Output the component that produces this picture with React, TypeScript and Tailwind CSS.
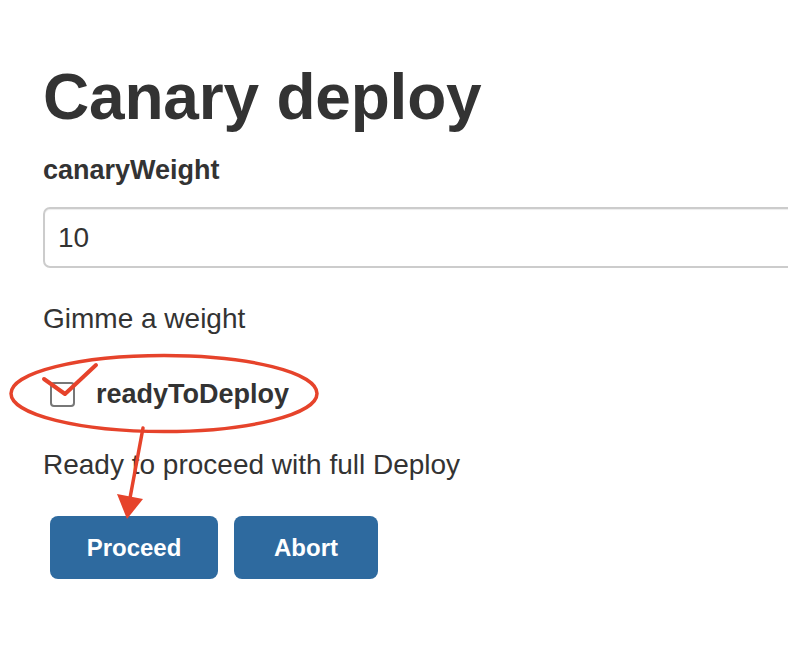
export default function App() {
  return (
    <div className="relative w-[788px] h-[662px] overflow-hidden bg-white text-[#333] font-['Liberation_Sans',Arial,sans-serif]">
      <div className="pl-[43px] pt-[62px]">
        <h1 className="text-[64px] leading-[70px] font-bold tracking-[-0.2px]">Canary deploy</h1>

        <label className="block mt-[20px] text-[27px] leading-[36px] font-bold">canaryWeight</label>
        <input
          readOnly
          value="10"
          className="block mt-[19px] w-[800px] h-[61px] px-[13px] border-2 border-[#ccc] rounded-[7px] text-[28px] text-[#333] outline-none shadow-[inset_0_1px_1px_rgba(0,0,0,0.075)]"
        />
        <p className="mt-[31px] text-[28px] leading-[40px]">Gimme a weight</p>

        <div className="mt-[37px] ml-[7px] flex items-center gap-[21px]">
          <span className="w-[25px] h-[25px] rounded-[4px] border-2 border-[#777] bg-white" />
          <span className="text-[27px] leading-[36px] font-bold">readyToDeploy</span>
        </div>

        <p className="mt-[33px] text-[28px] leading-[40px]">Ready to proceed with full Deploy</p>

        <div className="mt-[31px] ml-[7px] flex gap-[16px]">
          <button className="w-[168px] h-[63px] rounded-[8px] bg-[#2e6a9f] text-white text-[24px] font-bold">
            Proceed
          </button>
          <button className="w-[144px] h-[63px] rounded-[8px] bg-[#2e6a9f] text-white text-[24px] font-bold">
            Abort
          </button>
        </div>
      </div>

      {/* red annotations drawn on top */}
      <svg className="absolute inset-0 pointer-events-none" width="788" height="662" viewBox="0 0 788 662">
        <ellipse cx="164" cy="393.5" rx="153" ry="38" fill="none" stroke="#e6432b" strokeWidth="3.5" />
        <polyline points="44,379 65,394 96,365" fill="none" stroke="#e6432b" strokeWidth="4" strokeLinecap="round" strokeLinejoin="round" />
        <line x1="143" y1="428" x2="130" y2="498" stroke="#e6432b" strokeWidth="3.5" strokeLinecap="round" />
        <polygon points="117,494 143,499 127,519" fill="#e6432b" />
      </svg>
    </div>
  );
}
